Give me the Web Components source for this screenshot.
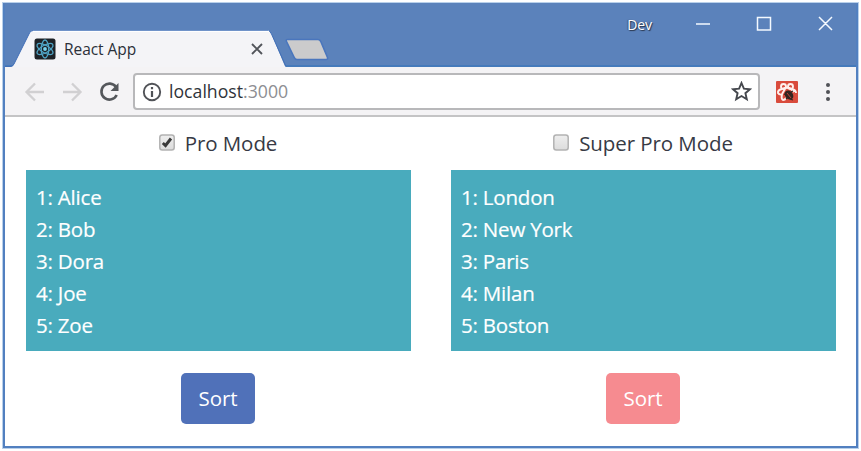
<!DOCTYPE html>
<html lang="en">
<head>
<meta charset="utf-8">
<title>React App</title>
<style>
html,body{margin:0;height:100%;background:#fff;overflow:hidden}
body{font-family:"Open Sans","Noto Sans",sans-serif;font-size:20.5px;color:#373a45;box-sizing:border-box;padding:2px}
</style>
</head>
<body>
<browser-window>
  <title-bar slot="title"><browser-tab slot="tab">React App</browser-tab>Dev</title-bar>
  <tool-bar slot="toolbar"><span slot="host">localhost</span><span slot="port">:3000</span></tool-bar>
  <sort-list label="Pro Mode" items="Alice,Bob,Dora,Joe,Zoe" checked></sort-list>
  <sort-list label="Super Pro Mode" items="London,New York,Paris,Milan,Boston" style="--button:#f68b90"></sort-list>
</browser-window>
<script>
function define(name, html, setup) {
  const template = document.createElement('template');
  template.innerHTML = html;
  customElements.define(name, class extends HTMLElement {
    constructor() {
      super();
      this.attachShadow({mode: 'open'}).append(template.content.cloneNode(true));
    }
    connectedCallback() { if (setup) setup(this, this.shadowRoot); }
  });
}

define('browser-window', `
<style>
:host{display:flex;flex-direction:column;box-sizing:border-box;height:447px;width:857px;background:#fff;border:3px solid #5280c0;border-top-color:#5b82bb;outline:1px solid #b9d0ea;outline-offset:-1px}
main{flex:1;display:grid;grid-template-columns:385px 385px;column-gap:40px;padding:0 20.5px;align-content:start}
</style>
<slot name="title"></slot><slot name="toolbar"></slot><main><slot></slot></main>`);

define('title-bar', `
<style>
:host{display:flex;height:62px;background:#5b82bb;color:#fff;font-size:14px;letter-spacing:-.1px;box-shadow:inset 0 -2px #457abb}
.tab{padding-top:25px;display:flex}
.plus{margin:8px 0 0 -1px;width:46px;height:24px}
.spacer{flex:1}
.profile{margin:10px 41px 0 0;line-height:20px;height:20px;text-shadow:1px 1px 1px #29364d,-1px 0 1px #405473}
.controls{margin:7px 21px 0 0;width:142px;height:28px}
</style>
<div class="tab"><slot name="tab"></slot>
<svg class="plus" viewBox="0 0 46 24"><path d="M2.500 1.500H33Q35 1.500 36 4L42.500 19.500Q43 21.500 41 21.500H12Q10 21.500 9 19L1.500 3.500Q.5 1.500 2.500 1.500Z" fill="#cbcbcc" stroke="#4a76bd" stroke-width="1.600"/></svg></div>
<div class="spacer"></div><div class="profile"><slot></slot></div>
<svg class="controls" viewBox="0 0 142 28" fill="none" stroke="#f4f9ff" stroke-width="1.5"><path d="M3 12H17M64.5 5.500H77.500V18H64.500ZM126 5L139 18M139 5L126 18"/></svg>`);

define('browser-tab', `
<style>
:host{position:relative;display:flex;align-items:center;box-sizing:border-box;width:281px;height:37px;padding:0 20px 0 29px;color:#2b3039;font-size:15.5px;letter-spacing:-.05px}
.shape{position:absolute;inset:0;width:281px;height:37px}
.icon{position:relative;width:22px;height:22px;margin-right:8px}
.text{position:relative;flex:1}
.close{position:relative;width:14px;height:14px;margin-right:2px}
</style>
<svg class="shape" viewBox="0 0 281 37"><path d="M0 37H5Q8 37 9 34L24 4Q25 .5 28 .5H263Q265 .5 266.500 4L279 34Q280 37 281 37Z" fill="#f4f4f7"/><path d="M0 36.500H5Q8 36.500 9 34L24 4Q25 .5 28 .5H263Q265 .5 266.500 4L281 36.500" fill="none" stroke="#416fb7"/><path d="M28 1.300H264" stroke="#fff" stroke-width="1.200"/></svg>
<svg class="icon" viewBox="0 0 22 22"><rect x=".5" y=".5" width="21" height="21" rx="2.500" fill="#1d2227"/><g fill="none" stroke="#4fa3c4" stroke-width="1.300"><ellipse cx="11" cy="11" rx="9" ry="3.700" transform="rotate(30 11 11)"/><ellipse cx="11" cy="11" rx="9" ry="3.700" transform="rotate(90 11 11)"/><ellipse cx="11" cy="11" rx="9" ry="3.700" transform="rotate(150 11 11)"/></g><circle cx="11" cy="11" r="1.900" fill="#76d2ee"/></svg>
<span class="text"><slot></slot></span>
<svg class="close" viewBox="0 0 14 14" stroke="#51545a" stroke-width="1.900"><path d="M2 2L12 12M12 2L2 12"/></svg>`);

define('tool-bar', `
<style>
:host{display:flex;align-items:center;box-sizing:border-box;height:50px;background:#f4f3f5;border-bottom:2px solid #c4c4c5;padding:1px 22px 0 18px}
.nav{width:100px;height:24px;margin-right:10px}
.address{display:flex;align-items:center;box-sizing:border-box;width:627px;height:37px;background:#fff;border:2px solid #b8b8ba;border-radius:4px;padding:0 6px 0 7px;font-size:17.7px}
.info{width:20px;height:20px;margin-right:7px}
.url{flex:1;white-space:nowrap;color:#30333a;margin-top:-1px}
.port{color:#8d8e92}
.star{width:21px;height:21px}
.extension{width:22px;height:22px;margin-left:16px}
.menu{width:6px;height:20px;margin-left:27px}
</style>
<svg class="nav" viewBox="0 0 100 24" fill="none"><g stroke="#d1d0d2" stroke-width="2.300"><path d="M21 12H4M12 3.500L3.500 12L12 20.500M40 12H57M49 3.500L57.500 12L49 20.500"/></g><path d="M93 7A8 8 0 1 0 93.700 15" stroke="#54575b" stroke-width="2.600"/><path d="M95.500 3V11H87.500Z" fill="#54575b"/></svg>
<div class="address"><svg class="info" viewBox="0 0 20 20"><circle cx="10" cy="10" r="8.200" fill="none" stroke="#505257" stroke-width="1.900"/><path d="M10 9V15M10 5V7.200" stroke="#505257" stroke-width="2.200"/></svg><span class="url"><slot name="host"></slot><span class="port"><slot name="port"></slot></span></span>
<svg class="star" viewBox="0 0 21 21"><path d="M10.500 2L12.900 7.700L19 8.200L14.400 12.200L15.800 18.200L10.500 15L5.200 18.200L6.600 12.200L2 8.200L8.100 7.700Z" fill="none" stroke="#45484e" stroke-width="1.900"/></svg></div>
<svg class="extension" viewBox="0 0 22 22"><rect width="22" height="22" rx="1" fill="#d94b3c"/><g fill="none" stroke="#fff0ed" stroke-width="1.900"><circle cx="7.500" cy="5.500" r="2.500"/><circle cx="14.500" cy="5.500" r="2.500"/><path d="M6 8Q11 5.500 16 8Q20 9 20 12M6 8Q1.500 9 2 12Q3 14 6 13.500Q5 18 7 19Q9 19 10 17M6 13L9 8M15 8L18 11"/></g><ellipse cx="13" cy="14" rx="3.800" ry="5" transform="rotate(-40 13 14)" fill="#332520"/><path d="M8 13L11 14M10 18L12 16M14 18L17 19M15 11L17 10" stroke="#332520" stroke-width="1.200"/><path d="M11 12L15 17" stroke="#d94b3c" stroke-width=".8"/></svg>
<svg class="menu" viewBox="0 0 6 20" fill="#505257"><circle cx="3" cy="3" r="2"/><circle cx="3" cy="10" r="2"/><circle cx="3" cy="17" r="2"/></svg>`);

define('check-box', `
<style>
:host{display:flex;justify-content:center;align-items:center;height:53px;line-height:32px}
svg{width:16px;height:17px;margin:-3px 10px 0 0}
span{margin-top:-1px}
path{display:none}
:host([checked]) path{display:block}
</style>
<svg viewBox="0 0 16 17"><defs><linearGradient id="g" x2="0" y2="1"><stop stop-color="#eee"/><stop offset="1" stop-color="#dcdcdc"/></linearGradient></defs><rect x=".8" y="1" width="14.400" height="15" rx="2.500" fill="url(#g)" stroke="#b2b2b2" stroke-width="1.500"/><path d="M3.800 9L6.500 11.500L12 4.500" fill="none" stroke="#393939" stroke-width="2.900"/></svg><span><slot></slot></span>`);

define('sort-list', `
<style>
:host{display:flex;flex-direction:column;align-items:center;letter-spacing:-.08px}
ol{box-sizing:border-box;width:385px;height:181px;margin:0;padding:10px 10.500px;list-style:none;background:#49abbd;color:#fff;letter-spacing:-.2px;-webkit-text-stroke:.2px #fff}
li{height:32px;line-height:34px}
button{margin:22px 0 0;width:74px;height:51px;padding:0 0 2px;border:0;border-radius:5px;background:var(--button,#5071b9);color:#fff;font:inherit;letter-spacing:inherit}
</style>
<check-box></check-box><ol></ol><button>Sort</button>`, (el, root) => {
  const box = root.querySelector('check-box');
  box.textContent = el.getAttribute('label');
  box.toggleAttribute('checked', el.hasAttribute('checked'));
  root.querySelector('ol').replaceChildren(...el.getAttribute('items').split(',').map((name, i) => {
    const li = document.createElement('li');
    li.textContent = (i + 1) + ': ' + name;
    return li;
  }));
});
</script>
</body>
</html>
